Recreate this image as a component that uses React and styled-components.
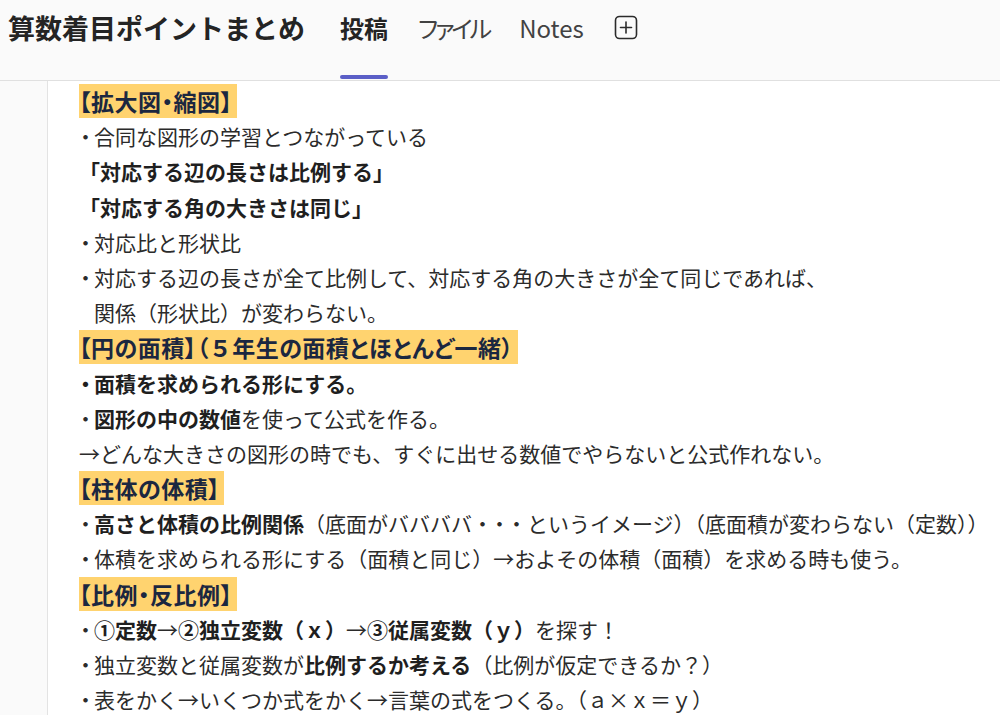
import styled, { createGlobalStyle } from "styled-components";

const GlobalStyle = createGlobalStyle`
  html, body {
    margin: 0;
    padding: 0;
    background: #ffffff;
    font-family: "Noto Sans CJK JP", "Noto Sans", sans-serif;
    color: #242424;
  }
`;

const Page = styled.div`
  width: 1000px;
  height: 715px;
  overflow: hidden;
  display: flex;
  flex-direction: column;
`;

const Header = styled.header`
  height: 80px;
  flex-shrink: 0;
  display: flex;
  align-items: stretch;
  padding-left: 8px;
  background: #fafafa;
  border-bottom: 1px solid #e0e0e0;
`;

const Title = styled.h1`
  margin: 0;
  padding-top: 9px;
  font-size: 27px;
  line-height: 38px;
  font-weight: 700;
  color: #242424;
  white-space: nowrap;
`;

const Tabs = styled.nav`
  display: flex;
  gap: 30px;
  margin-left: 35px;
`;

const Tab = styled.div`
  display: flex;
  flex-direction: column;
  padding-top: 11px;
  font-size: 24px;
  line-height: 34px;
  font-weight: ${(p) => (p.active ? 600 : 400)};
  color: ${(p) => (p.active ? "#242424" : "#424242")};
  font-feature-settings: "palt";
  letter-spacing: ${(p) => (p.tight ? "-3px" : "0")};
  white-space: nowrap;
`;

const Indicator = styled.span`
  margin-top: auto;
  margin-bottom: 1px;
  height: 4px;
  border-radius: 2px;
  background: ${(p) => (p.active ? "#5b5fc7" : "transparent")};
`;

const AddTab = styled.div`
  padding-top: 15px;
  color: #333;
`;

const Body = styled.div`
  flex: 1;
  display: flex;
  min-height: 0;
`;

const Rail = styled.aside`
  width: 47px;
  flex-shrink: 0;
  background: #fafafa;
  border-right: 1px solid #e3e3e3;
`;

const Note = styled.main`
  flex: 1;
  padding: 3px 0 0 31px;
  background: #ffffff;
`;

const Line = styled.div`
  font-size: 21px;
  line-height: 35.2px;
  height: 35.2px;
  white-space: nowrap;
  padding-left: ${(p) => (p.indent ? "15px" : "0")};
  font-weight: ${(p) => (p.bold ? 700 : 400)};
  color: ${(p) => (p.bold ? "#1f1f1f" : "#2b2b2b")};
`;

const Heading = styled.span`
  background: #ffd36f;
  color: #1b2740;
  font-size: 23px;
  font-weight: 700;
  font-feature-settings: "palt";
  letter-spacing: 0.5px;
  padding: 0 4px 0 0;
`;

// full-width digit kept at its normal width inside a proportional heading
const Wide = styled.span`
  font-feature-settings: normal;
`;

const Bullet = styled.span`
  display: inline-block;
  width: 15px;
  text-indent: -4px;
  overflow: visible;
`;

const Strong = styled.b`
  font-weight: 700;
  color: #1f1f1f;
`;

const Dots = styled.span`
  letter-spacing: -4px;
  margin-right: 4px;
`;

const PlusIcon = () => (
  <svg width="24" height="25" viewBox="0 0 24 25" fill="none" stroke="#2b2b2b" strokeWidth="1.6" strokeLinecap="round">
    <rect x="1.5" y="1.5" width="21" height="22" rx="4" />
    <line x1="12" y1="7" x2="12" y2="18" />
    <line x1="6.5" y1="12.5" x2="17.5" y2="12.5" />
  </svg>
);

const tabs = [
  { label: "投稿", active: true },
  { label: "ファイル", tight: true },
  { label: "Notes" },
];

export default function App() {
  return (
    <Page>
      <GlobalStyle />
      <Header>
        <Title>算数着目ポイントまとめ</Title>
        <Tabs>
          {tabs.map((t) => (
            <Tab key={t.label} active={t.active} tight={t.tight}>
              {t.label}
              <Indicator active={t.active} />
            </Tab>
          ))}
          <AddTab>
            <PlusIcon />
          </AddTab>
        </Tabs>
      </Header>
      <Body>
        <Rail />
        <Note>
          <Line>
            <Heading>【拡大図・縮図】</Heading>
          </Line>
          <Line>
            <Bullet>・</Bullet>合同な図形の学習とつながっている
          </Line>
          <Line bold>「対応する辺の長さは比例する」</Line>
          <Line bold>「対応する角の大きさは同じ」</Line>
          <Line>
            <Bullet>・</Bullet>対応比と形状比
          </Line>
          <Line>
            <Bullet>・</Bullet>対応する辺の長さが全て比例して、対応する角の大きさが全て同じであれば、
          </Line>
          <Line indent>関係（形状比）が変わらない。</Line>
          <Line>
            <Heading>
              【円の面積】（<Wide>５</Wide>年生の面積とほとんど一緒）
            </Heading>
          </Line>
          <Line bold>
            <Bullet>・</Bullet>面積を求められる形にする。
          </Line>
          <Line>
            <Bullet>・</Bullet>
            <Strong>図形の中の数値</Strong>を使って公式を作る。
          </Line>
          <Line>→どんな大きさの図形の時でも、すぐに出せる数値でやらないと公式作れない。</Line>
          <Line>
            <Heading>【柱体の体積】</Heading>
          </Line>
          <Line>
            <Bullet>・</Bullet>
            <Strong>高さと体積の比例関係</Strong>（底面がババババ<Dots>・・・</Dots>というイメージ）（底面積が変わらない（定数））
          </Line>
          <Line>
            <Bullet>・</Bullet>体積を求められる形にする（面積と同じ）→およその体積（面積）を求める時も使う。
          </Line>
          <Line>
            <Heading>【比例・反比例】</Heading>
          </Line>
          <Line>
            <Bullet>・</Bullet>
            <Strong>①定数</Strong>→<Strong>②独立変数（ｘ）</Strong>→<Strong>③従属変数（ｙ）</Strong>を探す！
          </Line>
          <Line>
            <Bullet>・</Bullet>独立変数と従属変数が<Strong>比例するか考える</Strong>（比例が仮定できるか？）
          </Line>
          <Line>
            <Bullet>・</Bullet>表をかく→いくつか式をかく→言葉の式をつくる。（ａ×ｘ＝ｙ）
          </Line>
        </Note>
      </Body>
    </Page>
  );
}
